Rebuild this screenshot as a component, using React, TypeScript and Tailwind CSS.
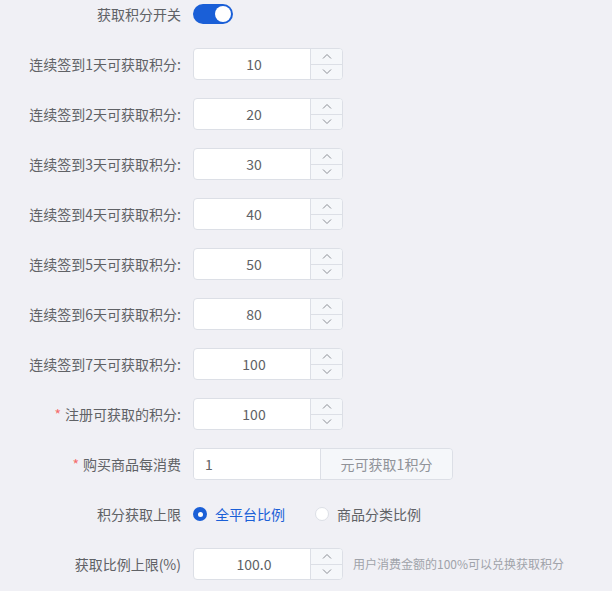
import React from 'react';

const font = { fontFamily: '"Noto Sans CJK SC", "Noto Sans", sans-serif' };

function Label({ text, required }: { text: string; required?: boolean }) {
  return (
    <div className="w-[193px] shrink-0 pr-3 text-right text-[14px] text-[#606266]">
      {required && <span className="mr-1 text-[#f56c6c]">*</span>}
      {text}
    </div>
  );
}

function Chevron({ up }: { up?: boolean }) {
  return (
    <svg width="10" height="6" viewBox="0 0 10 6" fill="none">
      <path
        d={up ? 'M1 5.5 L5 1.5 L9 5.5' : 'M1 0.5 L5 4.5 L9 0.5'}
        stroke="#8a8d94"
        strokeWidth="1"
      />
    </svg>
  );
}

function NumberInput({ value }: { value: string }) {
  return (
    <div className="flex h-8 w-[150px] overflow-hidden rounded border border-[#dcdfe6] bg-white">
      <div className="flex flex-1 items-center justify-center pl-1 text-[14px] text-[#606266]">{value}</div>
      <div className="flex w-8 flex-col border-l border-[#dcdfe6] bg-[#f5f7fa]">
        <div className="flex flex-1 items-center justify-center border-b border-[#dcdfe6]">
          <Chevron up />
        </div>
        <div className="flex flex-1 items-center justify-center">
          <Chevron />
        </div>
      </div>
    </div>
  );
}

const days = [
  { d: 1, v: '10' },
  { d: 2, v: '20' },
  { d: 3, v: '30' },
  { d: 4, v: '40' },
  { d: 5, v: '50' },
  { d: 6, v: '80' },
  { d: 7, v: '100' },
];

export default function App() {
  return (
    <div className="min-h-[591px] w-full bg-[#f0f0f5] pt-1" style={font}>
      <div className="flex h-5 items-center">
        <Label text="获取积分开关" />
        <div className="flex h-5 w-10 items-center justify-end rounded-full bg-[#1a5fd7] px-[2px]">
          <div className="h-4 w-4 rounded-full bg-white" />
        </div>
      </div>

      <div className="mt-6 flex flex-col gap-[18px]">
        {days.map((r) => (
          <div key={r.d} className="flex h-8 items-center">
            <Label text={`连续签到${r.d}天可获取积分:`} />
            <NumberInput value={r.v} />
          </div>
        ))}

        <div className="flex h-8 items-center">
          <Label text="注册可获取的积分:" required />
          <NumberInput value="100" />
        </div>

        <div className="flex h-8 items-center">
          <Label text="购买商品每消费" required />
          <div className="flex h-8 overflow-hidden rounded border border-[#dcdfe6]">
            <div className="flex w-[126px] items-center bg-white px-[11px] text-[14px] text-[#606266]">1</div>
            <div className="flex w-[132px] items-center justify-center border-l border-[#dcdfe6] bg-[#f5f7fa] text-[14px] text-[#909399]">
              元可获取1积分
            </div>
          </div>
        </div>

        <div className="flex h-8 items-center">
          <Label text="积分获取上限" />
          <div className="flex items-center text-[14px]">
            <span className="flex h-[14px] w-[14px] items-center justify-center rounded-full bg-[#1a5fd7]">
              <span className="h-[5px] w-[5px] rounded-full bg-white" />
            </span>
            <span className="ml-[8px] text-[#1a5fd7]">全平台比例</span>
            <span className="ml-[30px] h-[14px] w-[14px] rounded-full border border-[#dcdfe6] bg-white" />
            <span className="ml-[8px] text-[#606266]">商品分类比例</span>
          </div>
        </div>

        <div className="flex h-8 items-center">
          <Label text="获取比例上限(%)" />
          <NumberInput value="100.0" />
          <span className="ml-[10px] text-[12px] text-[#a0a3aa]">用户消费金额的100%可以兑换获取积分</span>
        </div>
      </div>
    </div>
  );
}
